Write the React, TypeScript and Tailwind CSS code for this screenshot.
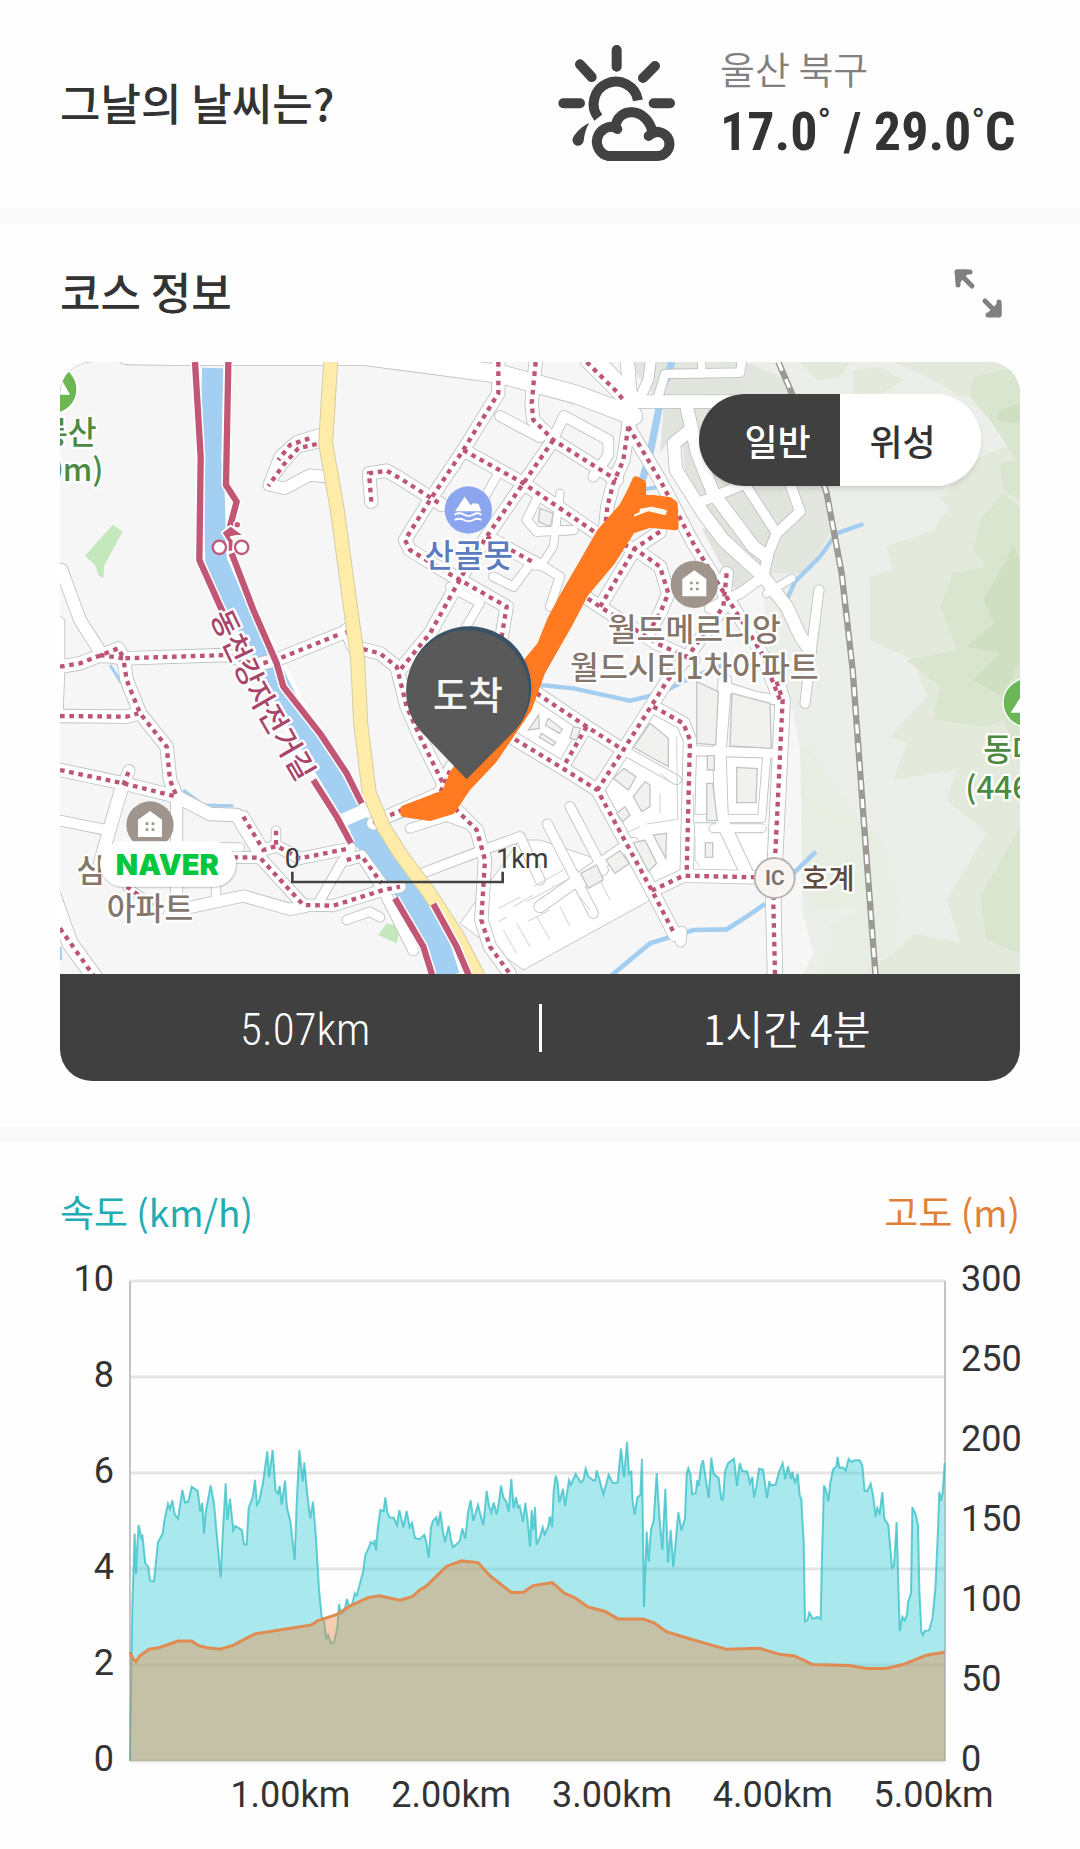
import {useState} from "react";

/// Activity detail page
///
/// Weather of the day, the recorded course on a map, and the speed / elevation chart.

const SANS = "font-['Roboto','Noto_Sans_CJK_KR',sans-serif]";
const KR = "font-['Noto_Sans_CJK_KR',sans-serif]";
const NARROW = "font-['Roboto_Condensed','Roboto','Noto_Sans_CJK_KR',sans-serif]";

type Road = { d: string, w?: number, dots?: boolean }

// Map units: 3 units per pixel at full width
const ROADS: Road[] = [
    {d: "M200-14 345-12 910-12 1020 2 1320 42 1550 104 1720 168", w: 54},
    {d: "M1600-20 1720 110", w: 34},
    {d: "M1580 6 1670 95 1690 120", dots: true, w: 34},
    {d: "M1700-20 1712 120 1705 200", w: 40},
    {d: "M1775-20 1765 60 1735 125", w: 30},
    {d: "M1700 125 2080 125", w: 38},
    {d: "M1790 125 1815 42 2040 38 2050-20", w: 26},
    {d: "M1925-20 1925 38", w: 22},
    {d: "M1880 140 1912 280 1960 400 2080 560 2120 590"},
    {d: "M1885 215 1842 250 1848 330 1930 460 1990 540 2110 650 2180 740 2222 830 2250 870"},
    {d: "M1925 425 2070 365", w: 30},
    {d: "M2060 380 2150 520", w: 28},
    {d: "M2190 370 2220 455 2150 520 2125 580 2110 650 2040 700 1950 745", w: 30},
    {d: "M2120 700 2195 655", w: 22},
    {d: "M2277 690 2250 900 2235 1030", w: 28},
    {d: "M1320 168 1440 232", w: 30},
    {d: "M1480 235 1512 168 1645 240 1645 285 1600 350", w: 30},
    {d: "M1320 330 1270 420", w: 24},
    {d: "M1430 420 1400 480 1430 515 1540 510", w: 26},
    {d: "M1500 400 1480 560 1440 620", w: 22},
    {d: "M1300 650 1360 680 1420 600 1500 650 1470 740", w: 26},
    {d: "M1170 680 1260 730 1200 830", w: 24},
    {d: "M775 225 710 245 660 290 627 375 675 385 750 345 795 350", w: 34},
    {d: "M770 252 715 265 670 315 625 378", dots: true, w: 24},
    {d: "M748 235 690 255 655 300", dots: true, w: 24},
    {d: "M934 425 927 340 980 332 1020 355 1115 415 1145 435", dots: true},
    {d: "M1315 6 1315 100 1210 270 1110 420 1035 540 1050 570 1165 640 1340 740 1325 830", dots: true},
    {d: "M1427 6 1415 130 1420 180 1480 240 1670 360", dots: true},
    {d: "M1480 240 1390 370 1280 530 1210 640 1110 820 1020 930", dots: true},
    {d: "M1210 270 1390 370 1610 520 1730 570 1800 620 1825 700 1800 760 1770 810", dots: true},
    {d: "M1705 200 1690 300 1660 370 1642 440 1635 510", dots: true},
    {d: "M1705 200 1800 360 1900 550 1980 680 2050 790 2105 880 2160 1020", dots: true},
    {d: "M1280 530 1425 610", dots: true},
    {d: "M1800 515 1725 565 1620 740", dots: true},
    {d: "M1560 700 1620 740 1790 850 1900 900", dots: true},
    {d: "M2000 640 1990 740 1890 880 1820 965 1690 1170 1612 1290", dots: true},
    {d: "M5 630 60 780 130 890", w: 36},
    {d: "M0 785 0 900", w: 26},
    {d: "M0 920 60 910 175 865 190 895 500 885 590 915 660 895 845 820", dots: true},
    {d: "M860 810 880 860 960 880 1010 920 1040 1040 1080 1130 1148 1268", dots: true},
    {d: "M120 885 190 895 200 960 240 1060 320 1160 330 1260 350 1310", dots: true},
    {d: "M0 1068 200 1070 235 1060", dots: true},
    {d: "M0 930-5 1068", w: 26},
    {d: "M0 1230 190 1270 350 1310", dots: true},
    {d: "M190 1275 207 1232", dots: true, w: 34},
    {d: "M185 1285 145 1420 118 1520"},
    {d: "M0 1382 150 1412", w: 30},
    {d: "M350 1310 450 1362 530 1365 600 1480", w: 38},
    {d: "M350 1330 350 1600", w: 34},
    {d: "M400 1460 540 1462", w: 24},
    {d: "M550 1370 610 1470 650 1458 720 1495 870 1465", dots: true, w: 34},
    {d: "M648 1412 648 1455", dots: true, w: 26},
    {d: "M380 1490 600 1493 730 1635 820 1637 970 1590 1020 1580", dots: true, w: 34},
    {d: "M860 1500 905 1488 970 1590 1060 1770", w: 32},
    {d: "M860 1500 905 1488 965 1570", dots: true, w: 32},
    {d: "M850 1500 780 1620", w: 28},
    {d: "M390 1642 550 1608 690 1648 735 1640", w: 34},
    {d: "M468 1560 468 1612", w: 26},
    {d: "M200 1580 300 1650", dots: true, w: 24},
    {d: "M860 1680 930 1655 960 1672", w: 26},
    {d: "M-20 1610 30 1750 110 1860", w: 46},
    {d: "M0 1705 110 1860", dots: true, w: 34},
    {d: "M940 1390 985 1368 1140 1300 1175 1220", dots: true},
    {d: "M1050 1405 1160 1370 1215 1390", w: 26},
    {d: "M1085 1540 1270 1470 1380 1430 1440 1560", w: 28},
    {d: "M1185 1345 1250 1410 1275 1500 1264 1680 1290 1760 1350 1842", dots: true, w: 38},
    {d: "M1430 1000 1580 1100 1690 1170", dots: true},
    {d: "M1690 1170 1850 1260", w: 26},
    {d: "M1365 1138 1500 1220 1612 1290 1775 1590 1845 1725", dots: true},
    {d: "M1580 1100 1510 1220", dots: true, w: 34},
    {d: "M1865 1715 1862 1745", w: 30},
    {d: "M1780 1040 1870 1090 1890 1140 1880 1540", dots: true},
    {d: "M1775 1592 1870 1547 2090 1552", dots: true},
    {d: "M1530 1340 1630 1530 1560 1570", w: 28},
    {d: "M1462 1392 1600 1660", w: 28},
    {d: "M1440 1640 1680 1470 1720 1450", w: 34},
    {d: "M2150 965 2168 1020 2145 1500 2140 1630 2145 1842", dots: true, w: 44},
    {d: "M1995 960 1978 1180 1985 1380 2060 1540", w: 38},
    {d: "M1890 1172 2150 1180", w: 28},
    {d: "M2010 985 2090 1010 2150 1020", w: 28},
    {d: "M1900 1376 2105 1376 2120 1190", w: 22},
    {d: "M1960 1405 2105 1405", w: 24},
];

// City blocks between the dense streets
const BLOCKS = [
    "1720,1162 1770,1090 1825,1135 1825,1220", "1660,1255 1692,1225 1728,1250 1705,1290",
    "1720,1310 1755,1265 1770,1275 1770,1340 1745,1355", "1670,1360 1695,1340 1710,1365 1688,1385",
    "1720,1448 1755,1440 1790,1510 1765,1535", "1780,1425 1820,1420 1817,1495",
    "1638,1500 1680,1472 1708,1510 1665,1540", "1562,1540 1610,1515 1630,1560 1585,1585",
    "1942,1187 1963,1187 1963,1230 1942,1230", "1940,1270 1958,1270 1972,1382 1940,1382",
    "1936,1448 1958,1448 1958,1492 1936,1492", "2030,1222 2092,1226 2088,1328 2030,1328",
    "1910,965 1975,995 1967,1155 1910,1150", "2016,1000 2130,1030 2134,1165 2010,1158",
    "1465,1075 1507,1108 1498,1120 1456,1095", "1445,1120 1487,1147 1480,1157 1438,1132",
    "1540,1100 1562,1105 1550,1140 1530,1135", "1436,1065 1438,1105 1405,1110",
    "1440,445 1480,460 1470,500 1435,485",
];

// Lots in the built-up zone east of the stream
const LOTS = [
    "1824,64 2060,60 2040,100 1812,102", "1810,150 1862,150 1870,205 1830,240 1800,280",
    "1868,240 1885,232 1930,370 1960,405 1920,420 1875,360",
    "1935,440 1970,425 2010,500 2090,590 2107,625 2030,560",
    "2002,400 2050,385 2138,530 2120,562 2075,520", "2085,385 2160,385 2190,465 2155,485",
    "1925,505 1965,510 2030,605 2080,655 2025,690 1970,590",
];

// Short kerb lines in the market area
const KERBS = [
    "M1315 1645 1380 1612M1360 1640 1420 1605M1315 1685 1340 1672M1405 1683 1470 1650M1520 1560 1400 1625",
    "M1330 1710 1370 1780M1370 1690 1410 1760M1430 1670 1470 1740M1550 1600 1590 1650M1620 1560 1650 1620",
    "M1800 1240 1825 1260M1800 1300 1800 1360M1760 1392 1850 1378M1700 1418 1740 1400M1850 1130 1853 1380",
    "M1905 1430 1905 1500 1920 1520M1900 1390 1900 1300M1420 1580 1510 1530M1500 1640 1530 1700",
];

function CourseMap() {
    const label = `${KR} font-medium`;
    return (
        <svg viewBox="0 6 2880 1836" className="block w-full" role="img" aria-label="코스 지도">
            <rect width="2880" height="1850" fill="#f6f6f6"/>
            <path d="M2070 6H2880V1842H2230L2260 1780 2225 1650 2225 1200 2190 1000 2130 900 2100 600 2120 300Z" fill="#ecefe9"/>
            <path d="M1700 6H2060L2180 60 2260 200 2310 520 2240 640 2100 640 1900 330 1800 130Z" fill="#e2e6de"/>
            <path d="M2220 1165 2265 1160 2250 1200 2290 1240 2240 1300 2300 1350 2420 1390 2450 1440 2380 1470 2400 1630 2260 1650 2230 1600Z" fill="#e9ede4"/>
            <path d="M2270 1842 2330 1720 2300 1700 2420 1640 2250 1640 2350 1500 2420 1440 2300 1380 2220 1300 2260 1180 2400 1390 2460 1430 2520 1640 2480 1842Z" fill="#e8ece0" opacity=".55"/>
            <path d="M2220 6H2370L2340 50 2270 60ZM2380 30 2460 20 2530 60 2450 110 2380 100ZM2500 6H2880V1842H2400L2500 1780 2560 1720 2700 1750 2660 1620 2780 1420 2660 1320 2690 1230 2500 1260 2540 1150 2490 1130 2600 1010 2560 900 2430 840 2430 650 2500 630 2480 560 2620 510 2670 440 2640 420 2740 300 2880 240V120L2700 110 2600 50Z" fill="#e4eadb"/>
            <path d="M2740 50 2880 20V420L2830 390 2820 310 2870 300 2790 180 2730 110ZM2760 480 2830 400 2880 440V1210L2830 1080 2780 1100 2620 1080 2640 980 2540 900 2690 870 2640 740 2680 640 2780 620 2740 570ZM2760 1610 2880 1400V1780L2780 1740Z" fill="#dae5cf"/>
            <path d="M2820 150 2880 130V190L2810 180ZM2770 720 2860 560 2880 600V900L2830 1010 2740 960 2820 880 2720 860 2800 790Z" fill="#cfdfc1"/>

            <polygon points="1200,1690 1380,1440 1440,1440 1620,1500 1690,1440 1790,1610 1390,1830 1320,1780" fill="#fff" stroke="#c6c8c8" strokeWidth="3"/>
            <polygon points="1610,1280 1770,1050 1870,1110 2120,1180 2120,1530 1860,1540 1780,1590" fill="#fff"/>
            <polygon points="1400,1060 1440,1010 1600,1120 1520,1230 1370,1120" fill="#fff"/>

            {/* small streams */}
            <g fill="none" stroke="#a3cef0">
                <path d="M1835 6 1800 130 1770 280 1750 350 1740 380" strokeWidth="22"/>
                <path d="M1740 390 1800 380M1895 355 1925 340" strokeWidth="12"/>
                <path d="M2410 492 2330 520 2280 590 2205 665 2180 720" strokeWidth="13"/>
                <path d="M1440 975 1540 985 1710 1022 1800 1000 1900 950 1990 915" strokeWidth="13"/>
                <path d="M1650 1850 1770 1750 1900 1710 2000 1708 2060 1670 2115 1632M2200 1540 2268 1475" strokeWidth="14"/>
                <path d="M150 915 185 970M370 1290 430 1335 520 1337M0 1760 2 1800M960 1395 1040 1365" strokeWidth="9"/>
            </g>
            <path d="M158 494 188 515 133 615 130 655 115 645 105 615 75 587ZM955 1725 980 1690 1020 1700 1010 1750Z" fill="#c4e8bb"/>

            {/* river */}
            <g fill="none" strokeLinejoin="round">
                <path d="M458 24 452 300 462 400 468 600 520 720 620 900 720 1100 860 1330 930 1450 1050 1600 1110 1710 1160 1850" stroke="#fff" strokeWidth="92"/>
                <path d="M458 24 452 300 462 400 468 600 520 720 620 900 720 1100 860 1330 930 1450" stroke="#a3d0f2" strokeWidth="64"/>
                <path d="M890 1400 960 1480 1065 1620 1115 1710 1160 1850" stroke="#a3d0f2" strokeWidth="80"/>
                <path d="M850 1380 930 1345" stroke="#fff" strokeWidth="40"/>
            </g>

            {LOTS.map((b) => <polygon key={b} points={b} fill="#e1e3dd"/>)}
            <g fill="none" strokeLinecap="round" strokeLinejoin="round">
                {ROADS.map((r) => <path key={r.d} d={r.d} stroke="#bcc0c0" strokeWidth={(r.w ?? 38) + 5}/>)}
                {ROADS.map((r) => <path key={r.d} d={r.d} stroke="#fff" strokeWidth={r.w ?? 38}/>)}
            </g>
            {BLOCKS.map((b) => <polygon key={b} points={b} fill="#f1f1f0" stroke="#c3c5c5" strokeWidth="4"/>)}
            {KERBS.map((k) => <path key={k} d={k} fill="none" stroke="#cfd1d1" strokeWidth="3"/>)}
            <g fill="none" stroke="#bd5574" strokeWidth="13" strokeDasharray="14 14">
                {ROADS.filter((r) => r.dots).map((r) => <path key={r.d} d={r.d}/>)}
            </g>

            {/* main road and cycle roads */}
            <g fill="none" strokeLinejoin="round">
                <path d="M812 6 797 250 832 450 893 900 902 1090 928 1300 970 1400 1020 1480 1105 1595 1190 1725 1255 1850" stroke="#d6cda4" strokeWidth="45"/>
                <path d="M812 6 797 250 832 450 893 900 902 1090 928 1300 970 1400 1020 1480 1105 1595 1190 1725 1255 1850" stroke="#ffeca9" strokeWidth="39"/>
                <path d="M405 6 422 290 418 600 490 760M760 1260 830 1370 873 1450M505 6 498 375 530 425 510 500M515 580 580 750 650 910 670 980 780 1120 860 1240 905 1330M1005 1615 1090 1760 1118 1850M1120 1632 1190 1760 1228 1850" stroke="#fff" strokeWidth="28"/>
                <path d="M405 6 422 290 418 600 490 760M760 1260 830 1370 873 1450M505 6 498 375 530 425 510 500M515 580 580 750 650 910 670 980 780 1120 860 1240 905 1330M1005 1615 1090 1760 1118 1850M1120 1632 1190 1760 1228 1850" stroke="#c15675" strokeWidth="19"/>
            </g>

            {/* railway */}
            <g fill="none">
                <path d="M2155 6 2230 180 2300 400 2345 640 2378 930 2420 1500 2447 1850" stroke="#9b9995" strokeWidth="19"/>
                <path d="M2155 6 2230 180 2300 400 2345 640 2378 930 2420 1500 2447 1850" stroke="#fff" strokeWidth="10" strokeDasharray="28 28"/>
            </g>

            {/* cyclist */}
            <g stroke="#fff" strokeWidth="10" paintOrder="stroke">
                <circle cx="532" cy="494" r="8" fill="#c15675"/>
                <path d="M488 518 512 500 528 512 546 524 524 526 508 530 518 542 516 572 506 572 506 546Z" fill="#c15675"/>
            </g>
            <g fill="#fff" stroke="#c15675" strokeWidth="7">
                <circle cx="478" cy="562" r="20"/>
                <circle cx="545" cy="562" r="20"/>
            </g>

            {/* recorded route */}
            <path d="M1728 360 1712 395 1688 440 1622 515 1562 620 1512 705 1472 780 1442 855 1405 900 1350 1000 1180 1240 1155 1300 1032 1347 1032 1360 1110 1372 1175 1352 1220 1285 1300 1200 1405 1045 1445 935 1525 795 1575 700 1655 605 1715 510 1770 492 1845 500 1842 432 1828 422 1748 412 1747 370Z" fill="#ff7a20" stroke="#ff7a20" strokeWidth="22" strokeLinejoin="round"/>
            <path d="M1722 464 1738 456 1740 446 1775 440 1812 448 1822 452 1816 466 1765 454 1722 470Z" fill="#fdf6ea"/>

            {/* places */}
            <g className={label} fill="#5b7bc0" stroke="#fff" strokeWidth="14" strokeLinejoin="round" paintOrder="stroke" textAnchor="middle">
                <circle cx="1225" cy="450" r="71" fill="#8ba6ef" strokeWidth="0"/>
                <path d="M1185 454 1214 410 1232 436 1240 430 1234 428 1256 432 1264 454Z" fill="#fff" strokeWidth="0"/>
                <path d="M1184 464Q1198 456 1212 464T1240 464 1264 464M1184 480Q1198 472 1212 480T1240 480 1264 480" fill="none" strokeWidth="6"/>
                <text x="1226" y="622" fontSize="96">산골못</text>
            </g>
            <g className={label} fill="#85766b" stroke="#fff" strokeWidth="14" strokeLinejoin="round" paintOrder="stroke" textAnchor="middle">
                <text x="1903" y="844" fontSize="94">월드메르디앙</text>
                <text x="1903" y="958" fontSize="94">월드시티1차아파트</text>
                <text x="92" y="1566" fontSize="94">심</text>
                <text x="270" y="1680" fontSize="94">아파트</text>
            </g>
            {[[1903, 673], [270, 1395]].map(([x, y]) => (
                <g key={x} transform={`translate(${x} ${y})`}>
                    <circle r="71" fill="#a0958c"/>
                    <path d="M-36 36V-16L0-42 36-16V36Z" fill="#fff"/>
                    <path d="M-13-8H-5V0H-13ZM5-8H13V0H5ZM-13 10H-5V18H-13ZM5 10H13V18H5Z" fill="#a0958c"/>
                </g>
            ))}
            <g className={label} fill="#4c8a41" stroke="#fff" strokeWidth="14" strokeLinejoin="round" paintOrder="stroke">
                <circle cx="-22" cy="88" r="71" fill="#6cb656"/>
                <path d="M-40 104 0 50 30 104Z" fill="#fff" strokeWidth="0"/>
                <text x="110" y="252" fontSize="94" textAnchor="end">무룡산</text>
                <text x="130" y="364" fontSize="94" textAnchor="end">(450m)</text>
                <circle cx="2902" cy="1028" r="71" fill="#6cb656" strokeWidth="8"/>
                <path d="M2852 1058 2902 980 2950 1058Z" fill="#fff" strokeWidth="0"/>
                <text x="2770" y="1202" fontSize="94">동대산</text>
                <text x="2716" y="1316" fontSize="94">(446m)</text>
            </g>
            <circle cx="2144" cy="1554" r="60" fill="#f7f4f1" stroke="#b9b5b1" strokeWidth="6"/>
            <text x="2144" y="1576" fontSize="62" textAnchor="middle" fill="#7c706a" className="font-['Roboto',sans-serif] font-semibold">IC</text>
            <text x="2226" y="1588" fontSize="86" fill="#5f4b41" stroke="#fff" strokeWidth="14" strokeLinejoin="round" paintOrder="stroke" className={label}>호계</text>
            <path id="cycle-road" d="M450 768 565 1010 720 1280 780 1380" fill="none"/>
            <text fontSize="88" fill="#a8456a" stroke="#fff" strokeWidth="14" strokeLinejoin="round" paintOrder="stroke" className={label}>
                <textPath href="#cycle-road">동천강자전거길</textPath>
            </text>

            {/* scale */}
            <path d="M697 1535V1566H1328V1535" fill="none" stroke="#444" strokeWidth="8"/>
            <g fill="#3c3c3c" stroke="#fff" strokeWidth="3" paintOrder="stroke" fontSize="81" className="font-['Roboto',sans-serif]">
                <text x="697" y="1523" textAnchor="middle">0</text>
                <text x="1308" y="1523">1km</text>
            </g>
            <rect x="120" y="1447" width="412" height="138" rx="69" fill="#000" opacity=".14"/>
            <rect x="120" y="1444" width="408" height="136" rx="68" fill="#fff"/>
            <text x="322" y="1544" fontSize="87" textAnchor="middle" fill="#03c73c" className="font-['Inter','Lato',sans-serif] font-black">NAVER</text>

            {/* finish pin */}
            <circle cx="1228" cy="985" r="186" fill="#3a5267"/>
            <path d="M1220 1258 1085 1117A184 184 0 1 1 1363 1113Z" fill="#595959"/>
            <text x="1224" y="1046" fontSize="114" textAnchor="middle" fill="#f5f5f5" className={`${KR} font-medium`}>도착</text>
        </svg>
    );
}

// Chart units: the plot spans x 271..2716 and y 238 (10 km/h) .. 1363 (0 km/h)
const SPEED_OUT = "271,1363 278,1000 285,830 289,925 292,870 297,810 306,845 308,832 317,900 326,908 331,940 343,942 355,850 369,830 374,800 385,760 391,772 398,752 405,785 415,795 428,728 436,757 446,755 456,720 474,730 482,778 488,758 493,830 498,780 513,717 523,760 543,933 550,820 558,712 563,798 571,748 581,822 587,812 607,822 613,855 621,855 627,770 639,745 646,704 652,762 658,755 669,715 683,637 688,698 699,634 708,730 715,736 720,718 726,762 736,706 742,770 752,800 765,892 771,760 779,634 789,708 794,663 803,740 812,795 820,755 828,830 838,960 846,1025 852,1030 860,1075 865,1068 875,1087 883,1085 893,1050 898,995 904,1018 914,1012 922,983 928,1002 938,995 945,970 951,975 958,955 970,920 977,880 988,862 993,850 1003,855 1005,845 1009,870 1014,820 1022,775 1032,777 1037,745 1043,780 1050,792 1062,793 1072,810 1079,775 1091,815 1101,777 1110,815 1117,805 1126,840 1140,843 1154,833 1160,850 1167,887 1174,815 1180,800 1190,792 1195,812 1202,778 1209,820 1216,850 1227,812 1234,845 1240,862 1260,848 1268,818 1277,842 1285,780 1293,752 1301,800 1315,762 1322,785 1331,810 1341,730 1348,765 1355,780 1362,757 1371,785 1378,755 1384,717 1391,745 1400,755 1407,778 1415,702 1422,770 1429,745 1435,768 1440,765 1450,802 1457,758 1464,800 1471,860 1476,775 1481,822 1486,768 1491,856 1500,840";
const SPEED_BACK = "1509,815 1515,832 1525,815 1531,790 1537,815 1542,730 1548,694 1554,710 1559,757 1570,725 1576,765 1588,705 1594,715 1608,690 1623,710 1631,705 1638,678 1645,695 1660,705 1667,705 1671,682 1680,705 1691,738 1707,692 1720,712 1734,710 1744,630 1753,698 1762,615 1768,690 1775,685 1779,755 1785,785 1793,745 1802,740 1807,655 1813,1002 1821,825 1827,895 1834,820 1842,800 1851,688 1860,800 1868,868 1877,725 1885,897 1893,822 1901,908 1908,850 1916,780 1925,822 1936,795 1941,690 1946,677 1952,690 1958,738 1968,735 1973,705 1977,718 1984,672 1990,658 1998,700 2007,746 2015,652 2022,690 2037,700 2045,750 2050,750 2056,685 2065,665 2083,655 2092,718 2100,665 2108,683 2123,685 2131,712 2138,697 2143,745 2150,720 2158,678 2170,680 2182,746 2189,707 2193,717 2208,715 2218,685 2229,665 2237,702 2245,672 2254,702 2258,685 2266,712 2274,690 2280,740 2285,750 2292,850 2296,1036 2303,1033 2309,1015 2320,1030 2333,1025 2343,1030 2347,880 2353,717 2360,730 2366,755 2372,710 2380,680 2390,672 2394,650 2399,675 2410,675 2418,682 2427,655 2437,662 2445,658 2460,658 2468,670 2475,730 2483,730 2493,713 2500,740 2508,790 2513,770 2520,782 2528,733 2534,795 2546,810 2557,910 2563,905 2571,803 2576,950 2580,1058 2588,1025 2595,1033 2602,1020 2605,990 2614,970 2618,768 2628,785 2635,810 2639,960 2645,1060 2650,1068 2655,1058 2668,1057 2678,1030 2687,960 2695,820 2699,732 2704,753 2709,735 2715,665";
const SPEED = `${SPEED_OUT} ${SPEED_BACK}`;
const ELEVATION = "271,1108 279,1122 289,1130 300,1117 328,1101 360,1097 415,1082 456,1082 475,1092 500,1097 540,1101 580,1092 645,1065 720,1056 815,1044 835,1034 890,1020 930,1000 985,980 1020,976 1080,986 1118,978 1140,962 1160,953 1220,907 1265,894 1315,898 1350,928 1385,950 1415,968 1450,968 1480,952 1538,945 1575,970 1605,980 1645,1002 1695,1012 1735,1030 1810,1030 1845,1040 1880,1060 1935,1073 2000,1088 2060,1101 2160,1099 2220,1113 2265,1117 2320,1137 2430,1139 2480,1146 2540,1146 2590,1137 2660,1115 2715,1108";

function Chart() {
    return (
        <div className={`${SANS} text-4xl text-[#333]`}>
            <div className="flex">
                <div className="-mt-[22px] -mb-[18px] mr-4 flex w-[54px] flex-col justify-between text-right leading-10">
                    {[10, 8, 6, 4, 2, 0].map((n) => <span key={n}>{n}</span>)}
                </div>
                <svg viewBox="271 238 2445 1125" preserveAspectRatio="none" className="h-[480px] min-w-0 flex-1 overflow-visible" role="img" aria-label="속도와 고도 그래프">
                    {[238, 463, 688, 913, 1138, 1363].map((y) => (
                        <path key={y} d={`M271 ${y}H2716`} stroke="#e4e4e4" strokeWidth="3" vectorEffect="non-scaling-stroke"/>
                    ))}
                    <path d="M271 238V1363M2716 238V1363" stroke="#c4c4c4" strokeWidth="2" vectorEffect="non-scaling-stroke"/>
                    <polygon points={`${SPEED} 2716,1363`} fill="rgb(59 206 215 / .43)"/>
                    <polyline points={SPEED} fill="none" stroke="rgb(40 186 195 / .7)" strokeWidth="2" vectorEffect="non-scaling-stroke"/>
                    <polygon points={`271,1363 ${ELEVATION} 2716,1363`} fill="rgb(237 139 69 / .42)"/>
                    <polyline points={ELEVATION} fill="none" stroke="#df8b51" strokeWidth="3" vectorEffect="non-scaling-stroke"/>
                </svg>
                <div className="-mt-[22px] -mb-[18px] ml-4 flex w-[59px] flex-col justify-between leading-10">
                    {[300, 250, 200, 150, 100, 50, 0].map((n) => <span key={n}>{n}</span>)}
                </div>
            </div>
            <div className="mt-3.5 grid grid-cols-5 pr-1.5 pl-[150px] text-center leading-10">
                {[1, 2, 3, 4, 5].map((km) => <span key={km}>{km.toFixed(2)}km</span>)}
            </div>
        </div>
    );
}

function WeatherIcon() {
    return (
        <svg viewBox="0 0 402 402" className="size-[134px]" fill="none" stroke="#424242" strokeWidth="30" strokeLinecap="round" aria-hidden="true">
            <path d="M200 45V95M90 88 125 126M315 93 279 129M40 205H90M311 205H360"/>
            <path d="M145 248A67 67 0 1 1 264 196" strokeLinecap="butt"/>
            <path d="M118 264C96 274 82 288 70 306A17 17 0 1 0 101 318C103 298 108 280 118 264Z" fill="#424242" stroke="none"/>
            <path d="M174 363A37 37 0 0 1 196 277C202 214 292 214 308 294A36 36 0 1 1 322 363Z" strokeLinejoin="miter"/>
            <path d="M183 275Q192 275 202 282M296 303Q308 291 322 290"/>
        </svg>
    );
}

function Degree() {
    return <span className="align-top text-[36px] leading-12 font-normal">°</span>;
}

export default function App() {
    const [mode, setMode] = useState("일반");

    return (
        <main className={`${KR} bg-[#fefefe] text-[#333]`}>
            <section className="flex h-52 items-center justify-between px-15 pb-1">
                <h2 className="text-[44px] font-medium">그날의 날씨는?</h2>
                <div className="flex items-center gap-9">
                    <WeatherIcon/>
                    <div className="w-[300px] pt-1">
                        <p className="text-[38px] leading-13 font-[350] text-[#808080]">울산 북구</p>
                        <p className={`${NARROW} pt-1 text-[54px] leading-17 font-bold whitespace-nowrap`}>
                            17.0<Degree/> / 29.0<Degree/>C
                        </p>
                    </div>
                </div>
            </section>

            <section className="border-y-16 border-[#f9f9f9] px-15 pb-[46px]">
                <div className="flex h-[138px] items-center justify-between pb-1">
                    <h2 className="text-[44px] font-medium">코스 정보</h2>
                    <button aria-label="지도 크게 보기" className="mt-1 mr-4">
                        <svg viewBox="0 0 52 52" className="size-13" fill="none" stroke="#808080" strokeWidth="5" strokeLinecap="round" strokeLinejoin="round">
                            <path d="M5 17V4H17M6 5 19 18M46 34V47H35M46 47 32 33" transform="translate(1 1)"/>
                            <path d="M5 5H14L6 14ZM47 47V38L38 47Z" fill="#808080"/>
                        </svg>
                    </button>
                </div>
                <div className="overflow-hidden rounded-[32px] bg-[#404040]">
                    <div className="relative">
                        <CourseMap/>
                        <div className="absolute top-8 right-[39px] flex overflow-hidden rounded-full bg-white text-[36px] font-medium shadow-md">
                            {["일반", "위성"].map((name) => (
                                <button
                                    key={name}
                                    aria-pressed={mode === name}
                                    onClick={() => setMode(name)}
                                    className={`h-23 w-[141px] first:pl-4 last:pr-4 ${mode === name ? "bg-[#404040] text-white" : "bg-white text-[#333]"}`}
                                >
                                    {name}
                                </button>
                            ))}
                        </div>
                    </div>
                    <div className="flex h-[107px] items-center text-center text-[41px] text-white">
                        <p className={`${NARROW} flex-1 pt-1 pl-3 text-[45px] font-light`}>5.07km</p>
                        <div className="h-12 w-[3px] bg-white"/>
                        <p className="flex-1 pl-3 font-[350]">1시간 4분</p>
                    </div>
                </div>
            </section>

            <section className="px-15 pt-[38px] pb-9">
                <div className="mb-10 flex justify-between text-[37px] leading-15">
                    <h3 className="text-[#1fadb3]">속도 (km/h)</h3>
                    <h3 className="text-[#e08138]">고도 (m)</h3>
                </div>
                <Chart/>
            </section>
        </main>
    );
}
